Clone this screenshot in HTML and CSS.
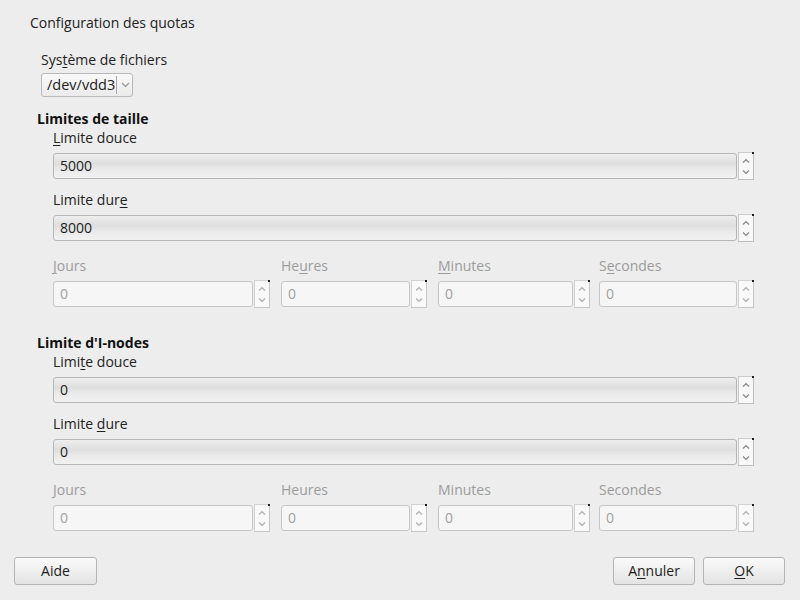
FILE: index.html
```html
<!DOCTYPE html>
<html lang="fr">
<head>
<meta charset="utf-8">
<title>Configuration des quotas</title>
<link rel="stylesheet" href="styles.css">
</head>
<body>
<svg class="defs" width="0" height="0" aria-hidden="true">
  <defs>
    <symbol id="spin" viewBox="0 0 16 28">
      <rect x="0.5" y="0.5" width="15" height="27" fill="#f8f8f8" stroke="#cbcbcb"/>
      <line x1="15.5" y1="0" x2="15.5" y2="28" stroke="#bdbdbd"/>
      <line x1="0" y1="27.5" x2="16" y2="27.5" stroke="#bdbdbd"/>
      <rect x="14" y="0" width="2" height="2" fill="#1e1e1e"/>
      <polyline points="5,10.5 8,7.8 11,10.5" fill="none" stroke="#8e8e8e" stroke-width="1.4"/>
      <polyline points="5,18.5 8,21.2 11,18.5" fill="none" stroke="#8e8e8e" stroke-width="1.4"/>
    </symbol>
    <symbol id="spin-dis" viewBox="0 0 16 28">
      <rect x="0.5" y="0.5" width="15" height="27" fill="#f9f9f9" stroke="#d2d2d2"/>
      <line x1="15.5" y1="0" x2="15.5" y2="28" stroke="#c6c6c6"/>
      <line x1="0" y1="27.5" x2="16" y2="27.5" stroke="#c6c6c6"/>
      <rect x="14" y="0" width="2" height="2" fill="#1e1e1e"/>
      <polyline points="5,10.5 8,7.8 11,10.5" fill="none" stroke="#b4b4b4" stroke-width="1.4"/>
      <polyline points="5,18.5 8,21.2 11,18.5" fill="none" stroke="#b4b4b4" stroke-width="1.4"/>
    </symbol>
  </defs>
</svg>

<div class="dialog">
  <div class="title">Configuration des quotas</div>

  <div class="fs">
    <div class="label">Sys<u>t</u>ème de fichiers</div>
    <div class="combo">
      <span class="combo-text">/dev/vdd3</span>
      <span class="combo-sep"></span>
      <svg class="combo-arrow" width="9" height="6" viewBox="0 0 9 6"><polyline points="1,1 4.5,4.5 8,1" fill="none" stroke="#9a9a9a" stroke-width="1.3"/></svg>
    </div>
  </div>

  <section class="group">
    <div class="group-title">Limites de taille</div>
    <div class="group-body">
      <div class="label first"><u>L</u>imite douce</div>
      <div class="spinbox wide">
        <div class="field">5000</div>
        <svg class="spin" width="16" height="28"><use href="#spin"/></svg>
      </div>
      <div class="label next">Limite dur<u>e</u></div>
      <div class="spinbox wide">
        <div class="field">8000</div>
        <svg class="spin" width="16" height="28"><use href="#spin"/></svg>
      </div>
      <div class="times">
        <div class="tcell c1">
          <div class="label dis"><u>J</u>ours</div>
          <div class="spinbox"><div class="field dis">0</div><svg class="spin" width="16" height="28"><use href="#spin-dis"/></svg></div>
        </div>
        <div class="tcell c2">
          <div class="label dis">He<u>u</u>res</div>
          <div class="spinbox"><div class="field dis">0</div><svg class="spin" width="16" height="28"><use href="#spin-dis"/></svg></div>
        </div>
        <div class="tcell c3">
          <div class="label dis"><u>M</u>inutes</div>
          <div class="spinbox"><div class="field dis">0</div><svg class="spin" width="16" height="28"><use href="#spin-dis"/></svg></div>
        </div>
        <div class="tcell c4">
          <div class="label dis">S<u>e</u>condes</div>
          <div class="spinbox"><div class="field dis">0</div><svg class="spin" width="16" height="28"><use href="#spin-dis"/></svg></div>
        </div>
      </div>
    </div>
  </section>

  <section class="group second">
    <div class="group-title">Limite d'I-nodes</div>
    <div class="group-body">
      <div class="label first">Limi<u>t</u>e douce</div>
      <div class="spinbox wide">
        <div class="field">0</div>
        <svg class="spin" width="16" height="28"><use href="#spin"/></svg>
      </div>
      <div class="label next">Limite <u>d</u>ure</div>
      <div class="spinbox wide">
        <div class="field">0</div>
        <svg class="spin" width="16" height="28"><use href="#spin"/></svg>
      </div>
      <div class="times">
        <div class="tcell c1">
          <div class="label dis">Jours</div>
          <div class="spinbox"><div class="field dis">0</div><svg class="spin" width="16" height="28"><use href="#spin-dis"/></svg></div>
        </div>
        <div class="tcell c2">
          <div class="label dis">Heures</div>
          <div class="spinbox"><div class="field dis">0</div><svg class="spin" width="16" height="28"><use href="#spin-dis"/></svg></div>
        </div>
        <div class="tcell c3">
          <div class="label dis">Minutes</div>
          <div class="spinbox"><div class="field dis">0</div><svg class="spin" width="16" height="28"><use href="#spin-dis"/></svg></div>
        </div>
        <div class="tcell c4">
          <div class="label dis">Secondes</div>
          <div class="spinbox"><div class="field dis">0</div><svg class="spin" width="16" height="28"><use href="#spin-dis"/></svg></div>
        </div>
      </div>
    </div>
  </section>

  <div class="buttons">
    <button class="btn help">Aide</button>
    <div class="right">
      <button class="btn">A<u>n</u>nuler</button>
      <button class="btn"><u>O</u>K</button>
    </div>
  </div>
</div>
</body>
</html>
```

FILE: styles.css
```css
html, body {
  margin: 0;
  padding: 0;
  background: #ededed;
}

body {
  font-family: "Open Sans", "DejaVu Sans", sans-serif;
  font-size: 14px;
  color: #222222;
}

.defs {
  position: absolute;
  width: 0;
  height: 0;
  overflow: hidden;
}

u {
  text-decoration-thickness: 1px;
  text-underline-offset: 2px;
}

.dialog {
  width: 800px;
  height: 600px;
  box-sizing: border-box;
  padding: 14px 15px 15px 14px;
  display: flex;
  flex-direction: column;
}

.title {
  line-height: 18px;
  padding-left: 16px;
}

.label {
  line-height: 18px;
  white-space: nowrap;
}

.fs {
  margin-top: 19px;
  padding-left: 27px;
}

.combo {
  margin-top: 4px;
  width: 92px;
  height: 24px;
  box-sizing: border-box;
  border: 1px solid #b9b9b9;
  border-radius: 3px;
  background: linear-gradient(#f9f9f9, #ebebeb);
  display: flex;
  align-items: center;
}

.combo-text {
  padding-left: 5px;
  width: 69px;
  line-height: 20px;
  font-size: 14.5px;
}

.combo-sep {
  width: 1px;
  height: 18px;
  background: #a9a9a9;
}

.combo-arrow {
  margin-left: 4px;
}

.group {
  margin-top: 13px;
}

.group.second {
  margin-top: 26px;
}

.group-title {
  font-weight: bold;
  line-height: 18px;
  padding-left: 23px;
  color: #111;
}

.group-body {
  padding-left: 39px;
  width: 701px;
}

.label.first {
  margin-top: 1px;
}

.label.next {
  margin-top: 11px;
}

.spinbox {
  display: flex;
  height: 28px;
  margin-top: 5px;
}

.field {
  flex: 1;
  height: 26px;
  margin-top: 1px;
  box-sizing: border-box;
  border: 1px solid #b6b6b6;
  border-radius: 3px;
  padding-left: 6px;
  line-height: 24px;
  background: linear-gradient(#efefef 0, #e8e8e8 15%, #dfdfdf 40%, #eaeaea 65%, #f2f2f2 100%);
  color: #1c1c1c;
}

.field.dis {
  background: #f6f6f6;
  border-color: #c6c6c6;
  color: #a0a0a0;
}

.spin {
  display: block;
  flex: none;
  margin-left: 1px;
}

.label.dis {
  color: #9c9c9c;
}

.times {
  display: flex;
  margin-top: 15px;
}

.tcell.c1 { width: 217px; margin-right: 11px; }
.tcell.c2 { width: 146px; margin-right: 11px; }
.tcell.c3 { width: 152px; margin-right: 9px; }
.tcell.c4 { width: 155px; }

.buttons {
  margin-top: auto;
  display: flex;
  justify-content: space-between;
  align-items: flex-end;
}

.right {
  display: flex;
  gap: 8px;
}

.btn {
  width: 82px;
  height: 28px;
  box-sizing: border-box;
  border: 1px solid #b4b4b4;
  border-radius: 3px;
  background: linear-gradient(#fafafa, #e3e3e3);
  font-family: "Open Sans", "DejaVu Sans", sans-serif;
  font-size: 14px;
  color: #1c1c1c;
  padding: 0;
  line-height: 26px;
}

.btn.help {
  width: 83px;
}
```
